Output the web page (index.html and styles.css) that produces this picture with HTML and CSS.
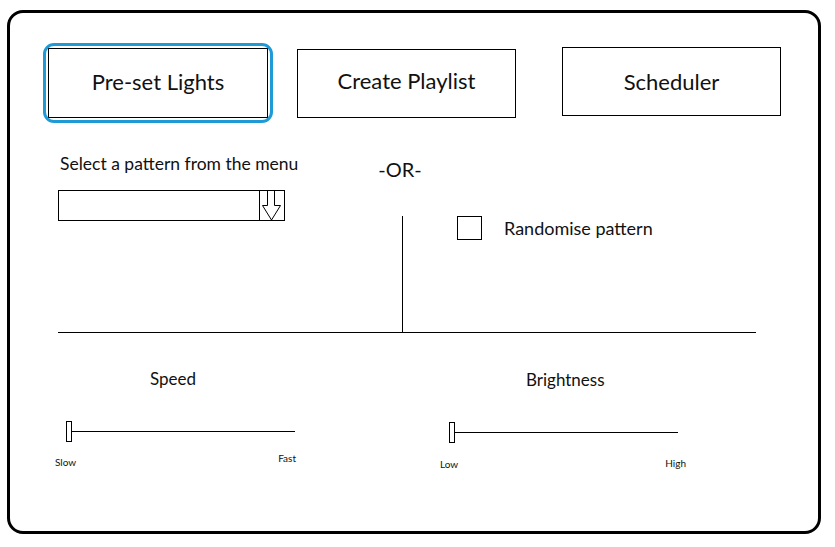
FILE: index.html
```html
<!DOCTYPE html>
<html lang="en">
<head>
    <meta charset="UTF-8">
    <meta name="viewport" content="width=device-width, initial-scale=1.0">
    <title>Lights Controller</title>
    <link rel="stylesheet" href="styles.css">
</head>
<body>
    <div class="frame">
        <div class="tabs">
            <button class="tab tab-active">Pre-set Lights</button>
            <button class="tab tab-playlist">Create Playlist</button>
            <button class="tab tab-scheduler">Scheduler</button>
        </div>

        <div class="pattern">
            <div class="pattern-menu">
                <p class="label">Select a pattern from the menu</p>
                <div class="dropdown">
                    <span class="dropdown-value"></span>
                    <span class="dropdown-arrow">
                        <svg width="24" height="30" viewBox="0 0 24 30">
                            <path d="M7.5 0 V14.5 H2.5 L11.5 29 L20.5 14.5 H14.5 V0" fill="none" stroke="#000" stroke-width="1"/>
                        </svg>
                    </span>
                </div>
            </div>

            <div class="pattern-or">
                <p class="or">-OR-</p>
                <div class="divider"></div>
            </div>

            <div class="pattern-random">
                <label class="random">
                    <span class="checkbox"></span>
                    <span class="random-text">Randomise pattern</span>
                </label>
            </div>
        </div>

        <div class="rule"></div>

        <div class="sliders">
            <div class="slider slider-speed">
                <p class="slider-title">Speed</p>
                <div class="track"><span class="thumb"></span></div>
                <div class="ends">
                    <span class="end-min">Slow</span>
                    <span class="end-max">Fast</span>
                </div>
            </div>

            <div class="slider slider-bright">
                <p class="slider-title">Brightness</p>
                <div class="track"><span class="thumb"></span></div>
                <div class="ends">
                    <span class="end-min">Low</span>
                    <span class="end-max">High</span>
                </div>
            </div>
        </div>
    </div>
</body>
</html>
```

FILE: styles.css
```css
body {
    margin: 0;
    background-color: #fff;
    color: #111;
    font-family: Lato, "Noto Sans", sans-serif;
}

p {
    margin: 0;
}

.frame {
    box-sizing: border-box;
    width: 814px;
    height: 524px;
    margin: 10px 0 0 7px;
    border: 3px solid #000;
    border-radius: 16px;
}

/* top tabs */

.tabs {
    display: flex;
    align-items: flex-start;
    padding: 35px 0 0 38px;
}

.tab {
    position: relative;
    box-sizing: border-box;
    width: 220px;
    height: 70px;
    padding: 0 0 3px;
    border: 1px solid #000;
    border-radius: 0;
    background-color: #fff;
    color: #111;
    font-family: inherit;
    font-size: 22px;
}

.tab-active::after {
    content: '';
    position: absolute;
    top: -6px;
    left: -6px;
    right: -6px;
    bottom: -6px;
    border: 3px solid #1e9bd6;
    border-radius: 11px;
}

.tab-playlist {
    margin: 1px 0 0 29px;
    width: 219px;
    height: 69px;
    padding-bottom: 7px;
}

.tab-scheduler {
    margin: -1px 0 0 46px;
    width: 219px;
    height: 69px;
    padding-bottom: 0;
}

/* pattern picker */

.pattern {
    display: flex;
    height: 214px;
    padding-left: 48px;
}

.pattern-menu {
    width: 227px;
    white-space: nowrap;
}

.label {
    margin-top: 36px;
    padding-left: 2px;
    font-size: 17.5px;
    line-height: 20px;
}

.dropdown {
    display: flex;
    box-sizing: border-box;
    width: 227px;
    height: 31px;
    margin-top: 16px;
    border: 1px solid #000;
}

.dropdown-value {
    flex: 1;
}

.dropdown-arrow {
    display: flex;
    width: 24px;
    border-left: 1px solid #000;
}

.pattern-or {
    display: flex;
    flex-direction: column;
    align-items: center;
    width: 52px;
    margin-left: 91px;
}

.or {
    margin: 39px 4px 0 0;
    font-size: 20px;
    line-height: 24px;
    white-space: nowrap;
}

.divider {
    flex: 1;
    width: 1px;
    margin-top: 35px;
    background-color: #000;
}

.pattern-random {
    margin-left: 29px;
    padding-top: 98px;
}

.random {
    display: flex;
    align-items: center;
}

.checkbox {
    box-sizing: border-box;
    width: 25px;
    height: 24px;
    border: 1px solid #000;
}

.random-text {
    margin-left: 22px;
    font-size: 18px;
}

.rule {
    width: 698px;
    height: 1px;
    margin-left: 48px;
    background-color: #000;
}

/* sliders */

.sliders {
    display: flex;
    align-items: flex-start;
    padding: 36px 0 0 45px;
}

.slider {
    display: flex;
    flex-direction: column;
}

.slider-title {
    font-size: 17px;
    line-height: 20px;
}

.track {
    position: relative;
    height: 21px;
    margin-top: 32px;
    width: 225px;
}

.track::before {
    content: '';
    position: absolute;
    left: 0;
    right: 0;
    top: 10px;
    height: 1px;
    background-color: #000;
}

.thumb {
    position: absolute;
    left: -4px;
    top: 0;
    box-sizing: border-box;
    width: 6px;
    height: 21px;
    border: 1px solid #000;
    background-color: #fff;
}

.ends {
    display: flex;
    justify-content: space-between;
    align-items: flex-start;
    font-size: 10px;
    line-height: 12px;
}

.slider-speed {
    width: 241px;
}

.slider-speed .slider-title {
    padding-left: 95px;
}

.slider-speed .track {
    margin-left: 15px;
}

.slider-speed .end-min {
    margin-top: 14px;
}

.slider-speed .end-max {
    margin-top: 10px;
}

.slider-bright {
    width: 246px;
    margin: 1px 0 0 144px;
}

.slider-bright .slider-title {
    padding-left: 86px;
}

.slider-bright .track {
    margin-left: 13px;
}

.slider-bright .end-min {
    margin-top: 15px;
}

.slider-bright .end-max {
    margin-top: 14px;
}
```
